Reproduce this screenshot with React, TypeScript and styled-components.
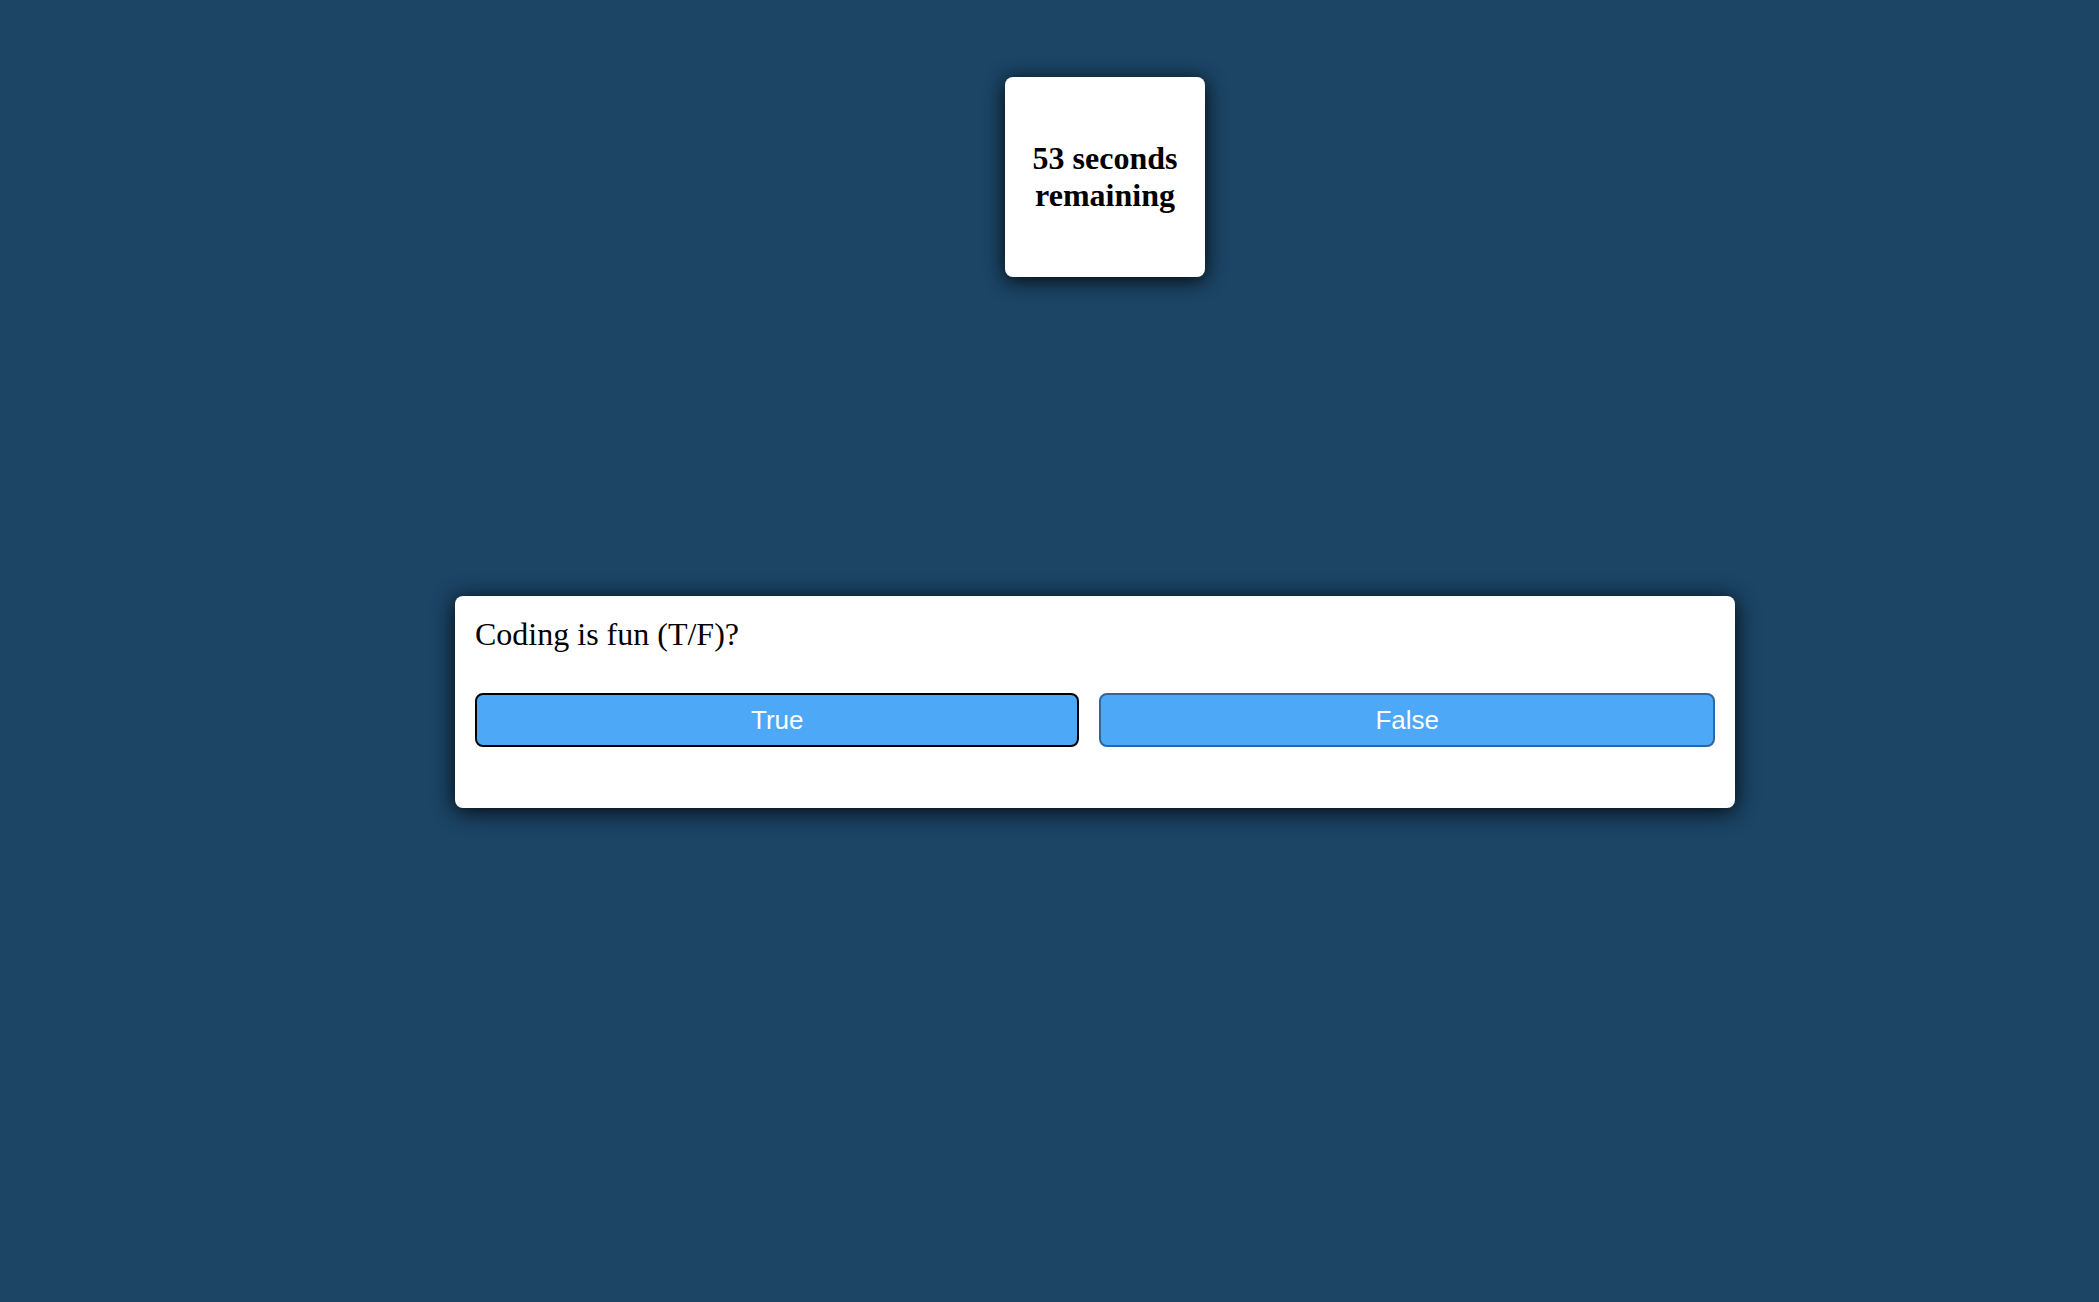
import React from "react";
import styled, { createGlobalStyle } from "styled-components";

const GlobalStyle = createGlobalStyle`
  html, body {
    margin: 0;
    padding: 0;
    background: #1b4465;
  }
  body {
    font-family: "Liberation Serif", "Times New Roman", serif;
  }
`;

const Page = styled.main`
  min-height: 1302px;
  box-sizing: border-box;
  display: flex;
  flex-direction: column;
  align-items: center;
  padding: 77px 0 0 91px;
  background: #1b4465;
`;

const TimerCard = styled.div`
  width: 200px;
  height: 200px;
  margin-left: 20px;
  box-sizing: border-box;
  display: flex;
  align-items: center;
  justify-content: center;
  background: #ffffff;
  border-radius: 8px;
  box-shadow: 0 3px 20px rgba(0, 0, 0, 0.9);
  font-family: "Liberation Serif", "Times New Roman", serif;
  font-weight: 700;
  font-size: 32px;
  line-height: 36.8px;
  text-align: center;
  color: #000;
`;

const QuestionCard = styled.section`
  width: 1280px;
  margin-top: 319px;
  box-sizing: border-box;
  padding: 19px 20px 20px;
  background: #ffffff;
  border-radius: 8px;
  box-shadow: 0 3px 22px rgba(0, 0, 0, 0.9);
`;

const Question = styled.div`
  font-family: "Liberation Serif", "Times New Roman", serif;
  font-size: 32px;
  line-height: 38px;
  color: #000;
`;

const AnswerRow = styled.div`
  display: flex;
  gap: 20px;
  margin: 40px 0 41px;
`;

const AnswerButton = styled.button<{ $focused?: boolean }>`
  flex: 1 1 auto;
  height: 54px;
  padding: 0 10px;
  box-sizing: border-box;
  background: #4da8f7;
  color: #ffffff;
  border: 2px solid ${(p) => (p.$focused ? "#000000" : "#2b68a2")};
  border-radius: 8px;
  font-family: "Liberation Sans", Arial, sans-serif;
  font-size: 26px;
  line-height: 30px;
  cursor: pointer;
`;

export default function App() {
  return (
    <>
      <GlobalStyle />
      <Page>
        <TimerCard>
          53 seconds
          <br />
          remaining
        </TimerCard>
        <QuestionCard>
          <Question>Coding is fun (T/F)?</Question>
          <AnswerRow>
            <AnswerButton $focused>True</AnswerButton>
            <AnswerButton>False</AnswerButton>
          </AnswerRow>
        </QuestionCard>
      </Page>
    </>
  );
}
